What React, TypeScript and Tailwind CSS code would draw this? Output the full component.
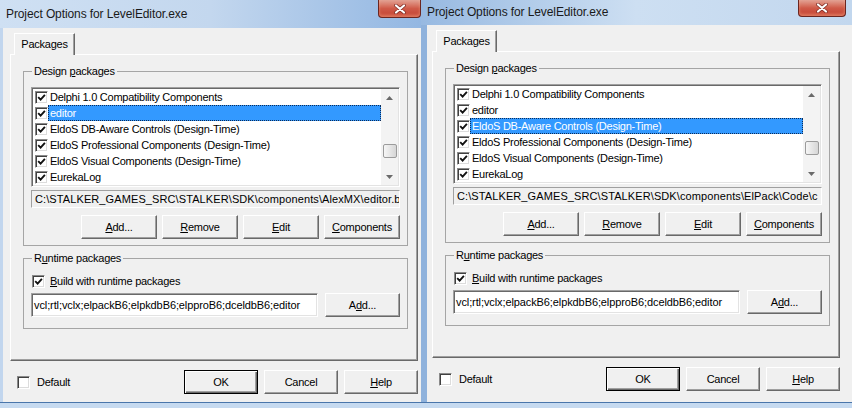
import React from 'react'

const packages = [
  'Delphi 1.0 Compatibility Components',
  'editor',
  'EldoS DB-Aware Controls (Design-Time)',
  'EldoS Professional Components (Design-Time)',
  'EldoS Visual Components (Design-Time)',
  'EurekaLog',
]

function Tick() {
  return (
    <svg width="9" height="9" viewBox="0 0 9 9" className="block">
      <path d="M1.2 4.2 L3.6 6.6 L7.9 1.9" fill="none" stroke="#111" strokeWidth="1.9" />
    </svg>
  )
}

function CheckBox({ checked }: { checked?: boolean }) {
  return (
    <span className="flex w-[13px] h-[13px] shrink-0 items-center justify-center bg-white border border-t-[#8a8a8a] border-l-[#8a8a8a] border-r-white border-b-white shadow-[inset_1px_1px_0_#404040,inset_-1px_-1px_0_#dcdcdc]">
      {checked && <Tick />}
    </span>
  )
}

function Button({ children, className = '', primary = false }: { children: React.ReactNode; className?: string; primary?: boolean }) {
  return (
    <button
      type="button"
      className={`h-[24px] shrink-0 flex items-center justify-center bg-[#f0f0f0] text-black border ${
        primary
          ? 'border-black shadow-[inset_1px_1px_0_#fff,inset_-1px_-1px_0_#696969,inset_-2px_-2px_0_#a0a0a0]'
          : 'border-t-white border-l-white border-r-[#696969] border-b-[#696969] shadow-[inset_-1px_-1px_0_#a0a0a0]'
      } ${className}`}
    >
      {children}
    </button>
  )
}

function Arrow({ up }: { up?: boolean }) {
  return (
    <div className="h-[17px] flex items-center justify-center">
      <svg width="7" height="4" viewBox="0 0 7 4">
        <path d={up ? 'M0 4 L3.5 0 L7 4 Z' : 'M0 0 L3.5 4 L7 0 Z'} fill="#6a6a6a" />
      </svg>
    </div>
  )
}

function Scrollbar() {
  return (
    <div className="w-[17px] shrink-0 flex flex-col bg-[#f3f3f3]">
      <Arrow up />
      <div className="flex-1 pt-[38px]">
        <div className="mx-auto w-[14px] h-[14px] rounded-[2px] border border-[#9b9b9b] bg-linear-to-r from-[#f6f6f6] to-[#d6d6d6]" />
      </div>
      <Arrow />
    </div>
  )
}

function PackageList({ selected }: { selected: number }) {
  return (
    <div className="flex h-[100px] p-[1px] bg-white border border-t-[#a0a0a0] border-l-[#a0a0a0] border-r-white border-b-white shadow-[inset_1px_1px_0_#696969,inset_-1px_-1px_0_#e3e3e3]">
      <div className="flex-1 min-w-0 flex flex-col">
        {packages.map((name, i) => (
          <div key={name} className="h-[16px] flex items-center pl-[2px]">
            <CheckBox checked />
            <span
              className={`flex-1 h-[16px] flex items-center pl-[1px] border border-dotted whitespace-nowrap ${
                i === selected ? 'bg-[#3399ff] text-white border-[#0d2c57]' : 'border-transparent'
              }`}
            >
              {name}
            </span>
          </div>
        ))}
      </div>
      <Scrollbar />
    </div>
  )
}

function CloseButton({ wide }: { wide?: boolean }) {
  return (
    <div
      className={`${wide ? 'w-[48px] h-[17px] mr-[6px]' : 'w-[43px] h-[18px]'} flex items-center justify-center rounded-b-[4px] border border-t-0 border-[#6b2620] bg-linear-to-b from-[#e2a294] via-[#cf5a48] to-[#c23e2f] shadow-[inset_0_-2px_3px_rgba(255,190,150,0.45)]`}
    >
      <svg width="12" height="10" viewBox="0 0 12 10">
        <path d="M2 1.5 L10 8.5 M10 1.5 L2 8.5" stroke="#7a2a22" strokeWidth="3.6" strokeLinecap="round" />
        <path d="M2 1.5 L10 8.5 M10 1.5 L2 8.5" stroke="#fff" strokeWidth="2.2" strokeLinecap="round" />
      </svg>
    </div>
  )
}

function Dialog({ side }: { side: 'left' | 'right' }) {
  const left = side === 'left'
  const path = left
    ? 'C:\\STALKER_GAMES_SRC\\STALKER\\SDK\\components\\AlexMX\\editor.bpl'
    : 'C:\\STALKER_GAMES_SRC\\STALKER\\SDK\\components\\ElPack\\Code\\c'

  return (
    <div className={`${left ? 'w-[421px]' : 'w-[431px]'} h-[408px] shrink-0 flex flex-col`}>
      <div
        className={`${
          left
            ? 'h-[28px] pl-[6px] bg-linear-to-r from-[#cfe0f3] via-[#c3d7ee] to-[#93b7e2]'
            : 'h-[25px] pl-[6px] bg-linear-to-r from-[#97b9e1] via-[#cddff2] to-[#c2d7ee]'
        } flex justify-between`}
      >
        <span className="self-center text-[12px] text-[#1a1a1a] tracking-[-0.1px]">Project Options for LevelEditor.exe</span>
        <CloseButton wide={!left} />
      </div>

      <div
        className={`flex-1 flex flex-col bg-[#f0f0f0] pt-[5px] ${
          left ? 'border-l-[3px] border-l-[#c2d6ee] pl-[7px] pb-[7px]' : 'border-l-[6px] border-l-[#8fb2dc] pl-[5px] pb-[10px]'
        }`}
      >
        <div className="flex">
          <div className="ml-[4px] w-[61px] h-[22px] -mb-px z-10 flex items-center justify-center bg-[#f0f0f0] border-t border-l border-r border-t-white border-l-white border-r-[#696969] shadow-[inset_-1px_0_0_#a0a0a0]">
            Packages
          </div>
        </div>

        <div className="w-[408px] h-[307px] flex flex-col border border-t-white border-l-white border-r-[#696969] border-b-[#696969] shadow-[inset_-1px_-1px_0_#a0a0a0]">
          <fieldset className="mt-[10px] ml-[12px] w-[385px] min-w-0 px-[7px] pt-[9px] pb-[6px] border border-[#a5a5a5]">
            <legend className="ml-[1px] px-[2px] leading-[13px]">
              Design <span className="underline">p</span>ackages
            </legend>
            <PackageList selected={left ? 1 : 2} />
            <div className="mt-[3px] h-[18px] flex items-center pl-[3px] overflow-hidden whitespace-nowrap tracking-[0.1px] border border-t-[#a0a0a0] border-l-[#a0a0a0] border-r-white border-b-white">
              {path}
            </div>
            <div className="mt-[7px] flex justify-end gap-[5px]">
              <Button className="w-[76px]">
                <span className="underline">A</span>dd...
              </Button>
              <Button className="w-[76px]">
                <span className="underline">R</span>emove
              </Button>
              <Button className="w-[76px]">
                <span className="underline">E</span>dit
              </Button>
              <Button className="w-[76px]">
                <span className="underline">C</span>omponents
              </Button>
            </div>
          </fieldset>

          <fieldset className="mt-[6px] ml-[12px] w-[385px] min-w-0 px-[7px] pt-[10px] pb-[11px] border border-[#a5a5a5]">
            <legend className="ml-[1px] px-[2px] leading-[13px]">
              R<span className="underline">u</span>ntime packages
            </legend>
            <div className="h-[13px] flex items-center gap-[5px] pl-[1px]">
              <CheckBox checked />
              <span>
                <span className="underline">B</span>uild with runtime packages
              </span>
            </div>
            <div className="mt-[5px] flex gap-[7px]">
              <div className="flex-1 min-w-0 h-[24px] flex items-center pl-[2px] bg-white overflow-hidden whitespace-nowrap tracking-[-0.1px] border border-t-[#a0a0a0] border-l-[#a0a0a0] border-r-white border-b-white shadow-[inset_1px_1px_0_#696969,inset_-1px_-1px_0_#e3e3e3]">
                vcl;rtl;vclx;elpackB6;elpkdbB6;elpproB6;dceldbB6;editor
              </div>
              <Button className="w-[75px]">
                A<span className="underline">d</span>d...
              </Button>
            </div>
          </fieldset>
        </div>

        <div className="mt-[9px] w-[408px] flex items-center justify-between">
          <div className="ml-[7px] flex items-center gap-[7px]">
            <CheckBox />
            <span>Default</span>
          </div>
          <div className="flex gap-[6px]">
            <Button primary className="w-[74px]">OK</Button>
            <Button className="w-[74px]">Cancel</Button>
            <Button className="w-[74px]">
              <span className="underline">H</span>elp
            </Button>
          </div>
        </div>
      </div>

      <div className="h-[6px] border-t border-[#4a76ab] bg-[#c6daf0]" />
    </div>
  )
}

export default function App() {
  return (
    <div className="w-[852px] h-[408px] overflow-hidden flex bg-[#c6daf0] font-['Liberation_Sans',Arial,sans-serif] text-[11px] tracking-[-0.25px] leading-[13px] text-black">
      <Dialog side="left" />
      <Dialog side="right" />
    </div>
  )
}
